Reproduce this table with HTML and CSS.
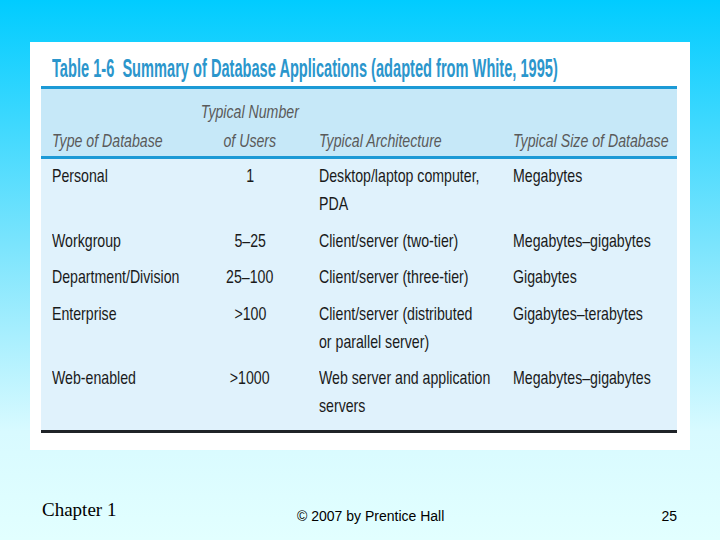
FILE: index.html
```html
<!DOCTYPE html>
<html>
<head>
<meta charset="utf-8">
<link rel="stylesheet" href="styles.css">
</head>
<body>
<div class="slide">
  <div class="card">
    <div class="title"><span class="sq title-text">Table 1-6&nbsp; Summary of Database Applications (adapted from White, 1995)</span></div>
    <div class="table">
      <div class="head grid">
        <div class="c1"><span class="sq">Type of Database</span></div>
        <div class="c2"><span class="sq sqc">Typical Number<br>of Users</span></div>
        <div class="c3"><span class="sq">Typical Architecture</span></div>
        <div class="c4"><span class="sq">Typical Size of Database</span></div>
      </div>
      <div class="body">
        <div class="row grid">
          <div class="c1"><span class="sq">Personal</span></div>
          <div class="c2"><span class="sq sqc">1</span></div>
          <div class="c3"><span class="sq">Desktop/laptop computer,<br>PDA</span></div>
          <div class="c4"><span class="sq">Megabytes</span></div>
        </div>
        <div class="row grid">
          <div class="c1"><span class="sq">Workgroup</span></div>
          <div class="c2"><span class="sq sqc">5–25</span></div>
          <div class="c3"><span class="sq">Client/server (two-tier)</span></div>
          <div class="c4"><span class="sq">Megabytes–gigabytes</span></div>
        </div>
        <div class="row grid">
          <div class="c1"><span class="sq">Department/Division</span></div>
          <div class="c2"><span class="sq sqc">25–100</span></div>
          <div class="c3"><span class="sq">Client/server (three-tier)</span></div>
          <div class="c4"><span class="sq">Gigabytes</span></div>
        </div>
        <div class="row grid">
          <div class="c1"><span class="sq">Enterprise</span></div>
          <div class="c2"><span class="sq sqc">&gt;100</span></div>
          <div class="c3"><span class="sq">Client/server (distributed<br>or parallel server)</span></div>
          <div class="c4"><span class="sq">Gigabytes–terabytes</span></div>
        </div>
        <div class="row grid">
          <div class="c1"><span class="sq">Web-enabled</span></div>
          <div class="c2"><span class="sq sqc">&gt;1000</span></div>
          <div class="c3"><span class="sq">Web server and application<br>servers</span></div>
          <div class="c4"><span class="sq">Megabytes–gigabytes</span></div>
        </div>
      </div>
    </div>
  </div>
  <div class="footer">
    <div class="chapter">Chapter 1</div>
    <div class="copy">© 2007 by Prentice Hall</div>
    <div class="page">25</div>
  </div>
</div>
</body>
</html>
```
FILE: styles.css
```css
html, body {
  margin: 0;
  padding: 0;
}
.slide {
  width: 720px;
  height: 540px;
  overflow: hidden;
  background: linear-gradient(to bottom, #00ccff 0%, #7ae4fd 45%, #d8faff 80%, #e2ffff 100%);
  display: flex;
  flex-direction: column;
  padding-top: 42px;
  box-sizing: border-box;
}
.card {
  margin-left: 30px;
  width: 660px;
  height: 408px;
  background: #ffffff;
  box-sizing: border-box;
  padding: 0 13px 0 11px;
  display: flex;
  flex-direction: column;
}
.sq {
  display: inline-block;
  white-space: nowrap;
  transform: scaleX(0.745);
  transform-origin: left center;
}
.sqc {
  transform-origin: center center;
  text-align: center;
}
.title {
  height: 44px;
  padding-left: 11px;
  font-family: "Liberation Sans", sans-serif;
  font-weight: 700;
  font-size: 26px;
  line-height: 30px;
  color: #2b96cc;
  padding-top: 11px;
  box-sizing: border-box;
}
.title-text {
  transform: scaleX(0.562);
  transform-origin: left center;
}
.table {
  border-top: 3px solid #1c9ad6;
  border-bottom: 3px solid #1f2328;
  font-family: "Liberation Sans", sans-serif;
  font-size: 19px;
  line-height: 28px;
}
.grid {
  display: grid;
  grid-template-columns: 129px 100px 175px 1fr;
  column-gap: 19px;
  padding-left: 11px;
}
.c2 {
  display: flex;
  justify-content: center;
}
.head {
  background: #c6e8f8;
  height: 70px;
  box-sizing: border-box;
  align-items: end;
  padding-bottom: 1px;
  border-bottom: 3px solid #1c9ad6;
  font-style: italic;
  color: #5a5a5a;
  line-height: 29px;
}
.head .c2 {
  align-items: flex-end;
}
.body {
  background: #e0f2fc;
  color: #1a1a1a;
  padding-top: 3px;
  padding-bottom: 1.5px;
}
.row {
  padding-bottom: 8.5px;
}
.footer {
  display: grid;
  grid-template-columns: 255px auto 1fr;
  padding: 0 43px 0 42px;
  margin-top: 49px;
  align-items: start;
}
.chapter {
  font-family: "Liberation Serif", serif;
  font-size: 19px;
  color: #000;
}
.copy {
  font-family: "Liberation Sans", sans-serif;
  font-size: 14px;
  color: #000;
  padding-top: 9px;
}
.page {
  font-family: "Liberation Sans", sans-serif;
  font-size: 14px;
  color: #000;
  text-align: right;
  padding-top: 9px;
}
```
